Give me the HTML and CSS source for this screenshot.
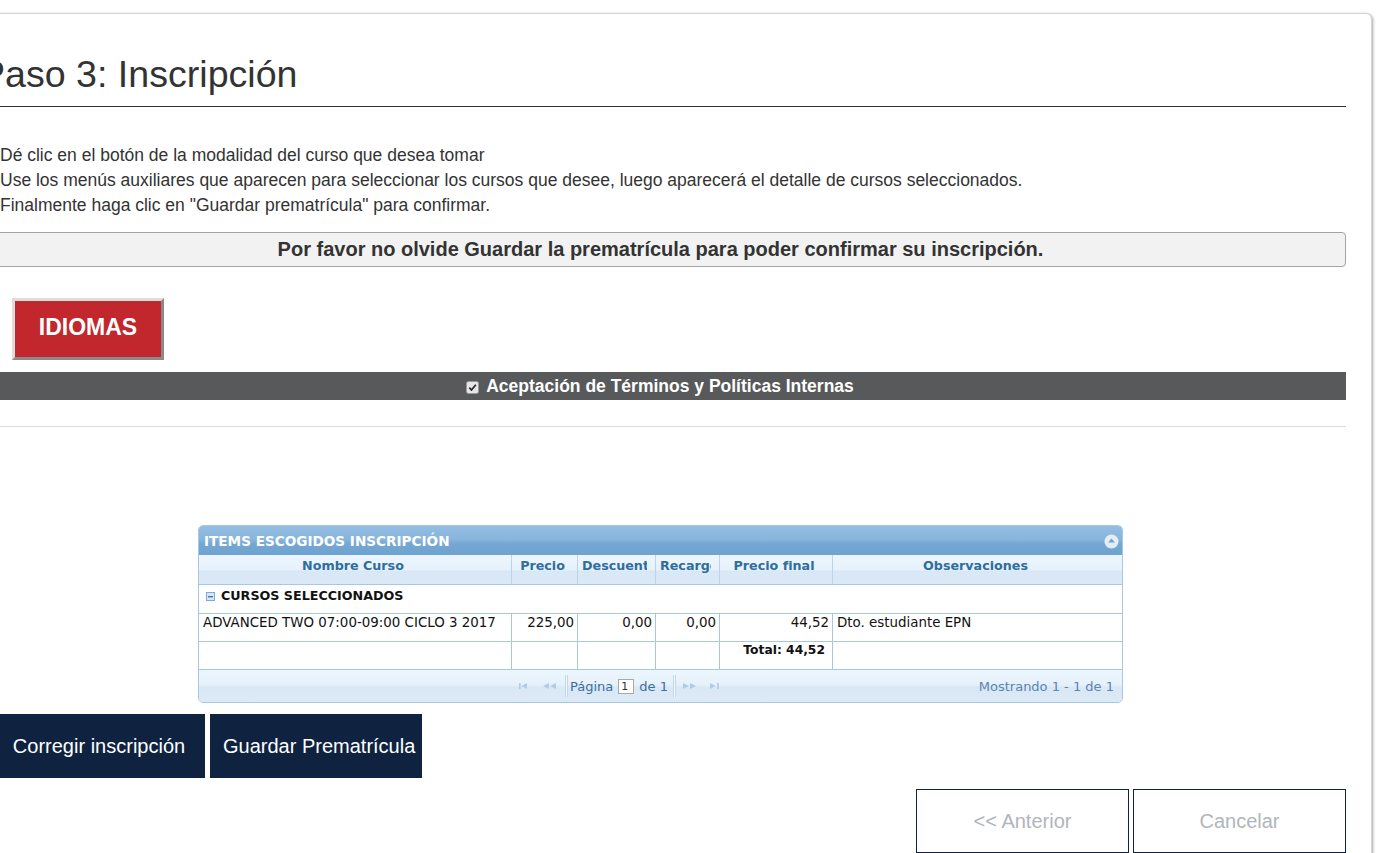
FILE: index.html
```html
<!DOCTYPE html>
<html lang="es">
<head>
<meta charset="utf-8">
<title>Paso 3: Inscripción</title>
<link rel="stylesheet" href="styles.css">
</head>
<body>
<div class="card">
  <div class="page-header"><h1>Paso 3: Inscripción</h1></div>
  <div class="intro">
    <p>Dé clic en el botón de la modalidad del curso que desea tomar<br>Use los menús auxiliares que aparecen para seleccionar los cursos que desee, luego aparecerá el detalle de cursos seleccionados.<br>Finalmente haga clic en "Guardar prematrícula" para confirmar.</p>
  </div>
  <div class="alert">Por favor no olvide Guardar la prematrícula para poder confirmar su inscripción.</div>
  <div class="modes"><a class="btn-mode" href="#">IDIOMAS</a></div>
  <div class="terms-bar">
    <svg class="chk" width="13" height="13" viewBox="0 0 13 13"><rect x=".5" y=".5" width="12" height="12" rx="2" fill="#e6e6e6" stroke="#9a9a9a"/><path d="M3.3 6.6l2.2 2.4 4.3-5.2" fill="none" stroke="#2b2b2b" stroke-width="1.8"/></svg>
    <span>Aceptación de Términos y Políticas Internas</span>
  </div>
  <hr class="sep">

  <div class="grid">
    <div class="caption">
      <span>ITEMS ESCOGIDOS INSCRIPCIÓN</span>
      <svg width="15" height="15" viewBox="0 0 15 15"><circle cx="7.5" cy="7.5" r="7" fill="#e4edf6"/><path d="M7.5 4.6l3.4 3.8H4.1z" fill="#6fa3d0"/></svg>
    </div>
    <table class="gtable">
      <colgroup>
        <col class="w1"><col class="w2"><col class="w3"><col class="w4"><col class="w5"><col class="w6">
      </colgroup>
      <thead>
        <tr>
          <th><div class="hd">Nombre Curso</div></th>
          <th><div class="hd">Precio</div></th>
          <th><div class="hd">Descuento</div></th>
          <th><div class="hd">Recargo</div></th>
          <th><div class="hd">Precio final</div></th>
          <th><div class="hd">Observaciones</div></th>
        </tr>
      </thead>
      <tbody>
        <tr class="group">
          <td colspan="6"><svg class="gicon" width="9" height="9" viewBox="0 0 9 9"><rect x=".5" y=".5" width="8" height="8" fill="#d6e7f7" stroke="#7eaad6"/><rect x="2" y="4" width="5" height="1.4" fill="#3f78b5"/></svg>CURSOS SELECCIONADOS</td>
        </tr>
        <tr class="row">
          <td>ADVANCED TWO 07:00-09:00 CICLO 3 2017</td>
          <td class="num">225,00</td>
          <td class="num">0,00</td>
          <td class="num">0,00</td>
          <td class="num">44,52</td>
          <td>Dto. estudiante EPN</td>
        </tr>
        <tr class="row foot">
          <td></td>
          <td></td>
          <td></td>
          <td></td>
          <td class="num total">Total: 44,52</td>
          <td></td>
        </tr>
      </tbody>
    </table>
    <div class="pager">
      <div class="pg-center">
        <span class="pg-btn pg-first"><svg width="8" height="6" viewBox="0 0 8 6"><rect x="0" y="0" width="1.6" height="6"/><path d="M8 0v6L2.5 3z"/></svg></span>
        <span class="pg-btn pg-prev"><svg width="13" height="6" viewBox="0 0 13 6"><path d="M6 0v6L0 3z M13 0v6L7 3z"/></svg></span>
        <span class="pg-sep"></span>
        <span class="pg-text">Página</span>
        <span class="pg-input">1</span>
        <span class="pg-text pg-of">de 1</span>
        <span class="pg-sep pg-sep2"></span>
        <span class="pg-btn pg-next"><svg width="13" height="6" viewBox="0 0 13 6"><path d="M0 0v6L6 3z M7 0v6L13 3z"/></svg></span>
        <span class="pg-btn pg-last"><svg width="9" height="6" viewBox="0 0 9 6"><path d="M0 0v6L5.5 3z"/><rect x="7.2" y="0" width="1.6" height="6"/></svg></span>
      </div>
      <div class="pg-info">Mostrando 1 - 1 de 1</div>
    </div>
  </div>

  <div class="actions">
    <a class="btn-dark" href="#">Corregir inscripción</a>
    <a class="btn-dark" href="#">Guardar Prematrícula</a>
  </div>
  <div class="nav">
    <a class="btn-outline" href="#">&lt;&lt; Anterior</a>
    <a class="btn-outline" href="#">Cancelar</a>
  </div>
</div>
</body>
</html>
```

FILE: styles.css
```css
* { box-sizing: border-box; }

html, body {
  margin: 0;
  height: 100%;
  overflow: hidden;
  background: #fff;
}

body {
  font-family: "Liberation Sans", Arial, sans-serif;
  color: #333;
}

a { text-decoration: none; }

.card {
  margin: 13px 0 0 -46px;
  width: 1418px;
  min-height: 900px;
  padding: 0 25px 40px;
  border: 1px solid #d4d4d4;
  border-radius: 6px;
  box-shadow: 1px 1px 3px rgba(0, 0, 0, 0.35);
  background: #fff;
}

.page-header {
  padding: 40px 0 12px;
  border-bottom: 1px solid #333;
}

.page-header h1 {
  margin: 0;
  font-size: 37.6px;
  line-height: 40px;
  font-weight: 400;
  color: #333;
}

.intro {
  margin-top: 36px;
  padding-left: 20px;
  font-size: 17.5px;
  line-height: 25px;
}

.intro p { margin: 0; }

.alert {
  margin-top: 14px;
  padding-right: 5px;
  border: 1px solid #a3a3a3;
  border-radius: 4px;
  background: #f2f2f2;
  text-align: center;
  font-weight: 700;
  font-size: 20px;
  line-height: 33px;
  color: #333;
}

.modes {
  margin-top: 31px;
  padding-left: 32px;
  height: 62px;
}

.btn-mode {
  display: block;
  width: 152px;
  height: 62px;
  padding-bottom: 3px;
  border: 3px solid;
  border-color: #dcdcdc #8a8a8a #8a8a8a #dcdcdc;
  background: #c1272d;
  color: #fff;
  font-weight: 700;
  font-size: 23px;
  line-height: 53px;
  text-align: center;
}

.terms-bar {
  margin-top: 12px;
  height: 28px;
  padding-right: 6px;
  background: #58595b;
  color: #fff;
  font-weight: 700;
  font-size: 17.5px;
  display: flex;
  justify-content: center;
  align-items: center;
  gap: 7px;
}

.chk { flex: none; margin-top: 2px; }

.sep {
  margin: 26px 0 0;
  height: 0;
  border: 0;
  border-top: 1px solid #dcdcdc;
}

/* ---------- grid ---------- */
.grid {
  margin: 98px 0 0 218px;
  width: 925px;
  border: 1px solid #a6c9e2;
  border-radius: 5px;
  overflow: hidden;
  font-family: "DejaVu Sans", Verdana, sans-serif;
}

.caption {
  height: 29px;
  padding: 2px 3px 0 5px;
  background: linear-gradient(to bottom, #94bde1 0%, #88b5dc 45%, #74a7d2 62%, #6fa3d0 100%);
  color: #fff;
  font-weight: 700;
  font-size: 13.6px;
  line-height: 27px;
  display: flex;
  justify-content: space-between;
  align-items: flex-start;
}

.caption svg { margin-top: 6px; }

.gtable {
  width: 923px;
  table-layout: fixed;
  border-collapse: separate;
  border-spacing: 0;
  font-size: 13.4px;
}

.w1 { width: 313px; }
.w2 { width: 66px; }
.w3 { width: 78px; }
.w4 { width: 64px; }
.w5 { width: 113px; }
.w6 { width: 289px; }

.gtable th {
  padding: 3px 8px 11px 4px;
  line-height: 15px;
  font-size: 12.7px;
  font-weight: 700;
  color: #2e6e9e;
  text-align: center;
  background: linear-gradient(to bottom, #edf6fe 0%, #e6f1fb 50%, #d9e8f6 56%, #dce9f7 100%);
  border-right: 1px solid #b9d4ea;
  border-bottom: 1px solid #a6c9e2;
}

.hd {
  overflow: hidden;
  white-space: nowrap;
}

.gtable th:last-child,
.gtable td:last-child { border-right: 0; }

.gtable td {
  padding: 1px 3px 11px 4px;
  line-height: 15px;
  color: #111;
  white-space: nowrap;
  overflow: hidden;
  vertical-align: top;
  border-right: 1px solid #a6c9e2;
  border-bottom: 1px solid #a6c9e2;
}

.gtable tr.group td {
  padding: 3px 2px 10px 7px;
  font-size: 12.7px;
  font-weight: 700;
  color: #111;
  border-right: 0;
}

.gicon {
  vertical-align: -1px;
  margin-right: 6px;
}

.gtable td.num { text-align: right; }

.gtable td.total {
  padding-right: 7px;
  font-size: 12.3px;
  font-weight: 700;
}

.pager {
  height: 32px;
  background: linear-gradient(to bottom, #edf6fe 0%, #e6f1fb 45%, #d9e8f6 55%, #dde9f6 100%);
  display: flex;
  align-items: center;
  font-size: 13px;
}

.pg-center {
  display: flex;
  align-items: center;
  padding-left: 315px;
  flex: 1;
}

.pg-btn {
  width: 18px;
  height: 18px;
  display: flex;
  align-items: center;
  justify-content: center;
  fill: #b0cbe5;
}

.pg-prev { margin-left: 8px; }

.pg-sep {
  width: 3px;
  height: 22px;
  margin: 0 2px 0 7px;
  border-left: 1px solid #c3d7ea;
  border-right: 1px solid #c3d7ea;
  background: #f4f9fe;
}

.pg-text { color: #3a6f9f; }

.pg-input {
  width: 16px;
  height: 15px;
  margin: 0 5px;
  border: 1px solid #a9a9a9;
  background: #fff;
  font-size: 11px;
  line-height: 13px;
  padding-left: 2px;
  color: #333;
}

.pg-sep2 { margin: 0 5px 0 5px; }

.pg-last { margin-left: 7px; }

.pg-info {
  padding-right: 8px;
  color: #5a86b1;
  white-space: nowrap;
}

/* ---------- buttons ---------- */
.actions {
  margin-top: 11px;
  padding-left: 13px;
  display: flex;
  gap: 5px;
}

.btn-dark {
  display: block;
  width: 212px;
  height: 64px;
  padding: 0 13px;
  background: #0f2341;
  color: #fff;
  font-size: 20px;
  line-height: 64px;
  text-align: center;
  white-space: nowrap;
}

.nav {
  margin-top: 11px;
  display: flex;
  justify-content: flex-end;
  gap: 4px;
}

.btn-outline {
  display: block;
  width: 213px;
  height: 64px;
  border: 1px solid #0f2341;
  background: #fff;
  color: #b1b5bd;
  font-size: 20px;
  line-height: 62px;
  text-align: center;
}
```
